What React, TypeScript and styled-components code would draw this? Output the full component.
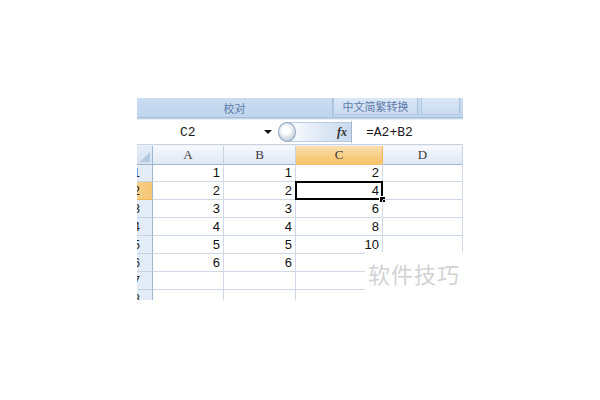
import React from "react";
import styled, { createGlobalStyle } from "styled-components";

const Global = createGlobalStyle`
  html, body { margin: 0; padding: 0; background: #ffffff; }
  body { width: 600px; height: 400px; overflow: hidden; font-family: "Liberation Sans", Arial, sans-serif; }
`;

const Page = styled.div`
  width: 600px;
  height: 400px;
  padding: 98px 0 0 137px;
  box-sizing: border-box;
`;

const Shot = styled.div`
  position: relative;
  width: 326px;
  height: 202px;
  overflow: hidden;
  display: flex;
  flex-direction: column;
  & > * {
    flex-shrink: 0;
  }
`;

const Ribbon = styled.div`
  height: 19px;
  display: flex;
  background: linear-gradient(#cadcf2, #c0d5ee);
`;

const Group = styled.div<{ $w?: number; $boxed?: boolean }>`
  ${(p) => (p.$w ? `width: ${p.$w}px;` : "flex: 1;")}
  box-sizing: border-box;
  display: flex;
  align-items: center;
  justify-content: center;
  font-family: "Noto Sans CJK SC", sans-serif;
  font-size: 11px;
  color: #5e7ba8;
  border-right: 1px solid #a9c0dc;
  ${(p) =>
    p.$boxed
      ? `background: linear-gradient(#dae7f7, #cbdcf1); border-left: 1px solid #b3c8e2; margin: 0 3px 2px 0; border-bottom: 1px solid #b3c8e2;`
      : ""}
`;

const RibbonEdge = styled.div`
  height: 3px;
  background: linear-gradient(#a9bed8 0 1px, #c4d5ea 1px 2px, #e6eef8 2px);
`;

const FormulaBar = styled.div`
  height: 24px;
  display: flex;
  align-items: center;
  background: #ffffff;
  font-family: "Liberation Mono", "Courier New", monospace;
  font-size: 13px;
  color: #1a1a1a;
`;

const NameBox = styled.div`
  width: 124px;
  padding-left: 43px;
  box-sizing: border-box;
`;

const Arrow = styled.div`
  width: 14px;
  display: flex;
  justify-content: center;
  &::before {
    content: "";
    border-left: 4px solid transparent;
    border-right: 4px solid transparent;
    border-top: 4px solid #111;
  }
`;

const Slider = styled.div`
  position: relative;
  margin-left: 3px;
  width: 73px;
  height: 20px;
  box-sizing: border-box;
  border-radius: 10px 0 0 10px;
  border-top: 1px solid #b9cbe2;
  border-bottom: 1px solid #b9cbe2;
  background: linear-gradient(90deg, #ffffff 10%, #e6eef8 45%, #c9d9ee);
  display: flex;
  align-items: center;
  justify-content: flex-end;
  padding-right: 4px;
`;

const Knob = styled.div`
  position: absolute;
  left: 0;
  top: -1px;
  width: 18px;
  height: 20px;
  border-radius: 50%;
  border: 1px solid #8ea6c3;
  box-sizing: border-box;
  background: radial-gradient(circle at 45% 40%, #ffffff 0 25%, #c9d3de 70%, #a9b7c7);
`;

const Fx = styled.span`
  font-family: "Liberation Serif", serif;
  font-style: italic;
  font-weight: bold;
  font-size: 12px;
  color: #333;
`;

const Divider = styled.div`
  width: 1px;
  height: 22px;
  background: #a3b6cc;
`;

const Formula = styled.div`
  padding-left: 14px;
`;

const BarEdge = styled.div`
  height: 2px;
  background: linear-gradient(#c7d3e2 0 1px, #eef2f7 1px);
`;

const Grid = styled.div`
  margin-left: -16px;
  display: grid;
  grid-template-columns: 32px 71px 72px 87px 80px;
  grid-auto-rows: 18px;
`;

const Corner = styled.div`
  position: relative;
  height: 19px;
  box-sizing: border-box;
  background: linear-gradient(#e4ecf7, #d5e1f0);
  border-right: 1px solid #9eb6ce;
  border-bottom: 1px solid #9eb6ce;
  &::after {
    content: "";
    position: absolute;
    right: 2px;
    bottom: 2px;
    border-left: 10px solid transparent;
    border-bottom: 10px solid #b4c8df;
  }
`;

const ColHead = styled.div<{ $sel?: boolean }>`
  height: 19px;
  box-sizing: border-box;
  display: flex;
  align-items: center;
  justify-content: center;
  font-family: "Liberation Serif", serif;
  font-size: 13px;
  color: #3a3a3a;
  border-right: 1px solid ${(p) => (p.$sel ? "#f0b75a" : "#c5d2e3")};
  border-bottom: 1px solid ${(p) => (p.$sel ? "#f2c26a" : "#9eb6ce")};
  background: ${(p) =>
    p.$sel ? "linear-gradient(#fae0b1, #f7cd81 60%, #f5c36c)" : "linear-gradient(#f7f9fc, #e9eff8 55%, #dee7f3)"};
`;

const RowHead = styled.div<{ $sel?: boolean }>`
  box-sizing: border-box;
  display: flex;
  align-items: center;
  justify-content: center;
  font-size: 12px;
  color: #222;
  border-right: 1px solid #9eb6ce;
  border-bottom: 1px solid ${(p) => (p.$sel ? "#f0b75a" : "#c5d2e3")};
  background: ${(p) => (p.$sel ? "linear-gradient(90deg, #f9d9a0, #f5c672)" : "#e4ecf7")};
`;

const Cell = styled.div`
  position: relative;
  box-sizing: border-box;
  display: flex;
  align-items: center;
  justify-content: flex-end;
  padding-right: 3px;
  font-family: "Liberation Sans", Arial, sans-serif;
  font-size: 13px;
  color: #111;
  border-right: 1px solid #d0d7e5;
  border-bottom: 1px solid #d0d7e5;
`;

const Selection = styled.div`
  position: absolute;
  left: -1px;
  top: -1px;
  right: -1px;
  bottom: -1px;
  border: 2px solid #000;
  pointer-events: none;
  &::after {
    content: "";
    position: absolute;
    right: -5px;
    bottom: -5px;
    width: 5px;
    height: 5px;
    background: #000;
    border: 1px solid #fff;
  }
`;

const Watermark = styled.div`
  position: absolute;
  left: 228px;
  top: 154px;
  right: 0;
  bottom: 0;
  background: #ffffff;
  padding: 8px 0 0 3px;
  font-family: "Noto Sans CJK SC", sans-serif;
  font-size: 22px;
  letter-spacing: 1px;
  color: #d2d2d2;
  line-height: 1.2;
`;

const data: (number | "")[][] = [
  [1, 1, 2],
  [2, 2, 4],
  [3, 3, 6],
  [4, 4, 8],
  [5, 5, 10],
  [6, 6, ""],
  ["", "", ""],
  ["", "", ""],
];

export default function App() {
  return (
    <Page>
      <Global />
      <Shot>
        <Ribbon>
          <Group $w={196}>校对</Group>
          <Group $w={85} $boxed>中文简繁转换</Group>
          <Group $boxed />
        </Ribbon>
        <RibbonEdge />
        <FormulaBar>
          <NameBox>C2</NameBox>
          <Arrow />
          <Slider>
            <Knob />
            <Fx>fx</Fx>
          </Slider>
          <Divider />
          <Formula>=A2+B2</Formula>
        </FormulaBar>
        <BarEdge />
        <Grid>
          <Corner />
          <ColHead>A</ColHead>
          <ColHead>B</ColHead>
          <ColHead $sel>C</ColHead>
          <ColHead>D</ColHead>
          {data.map((row, i) => (
            <React.Fragment key={i}>
              <RowHead $sel={i === 1}>{i + 1}</RowHead>
              {row.map((v, j) => (
                <Cell key={j}>
                  {v}
                  {i === 1 && j === 2 ? <Selection /> : null}
                </Cell>
              ))}
              <Cell />
            </React.Fragment>
          ))}
        </Grid>
        <Watermark>软件技巧</Watermark>
      </Shot>
    </Page>
  );
}
